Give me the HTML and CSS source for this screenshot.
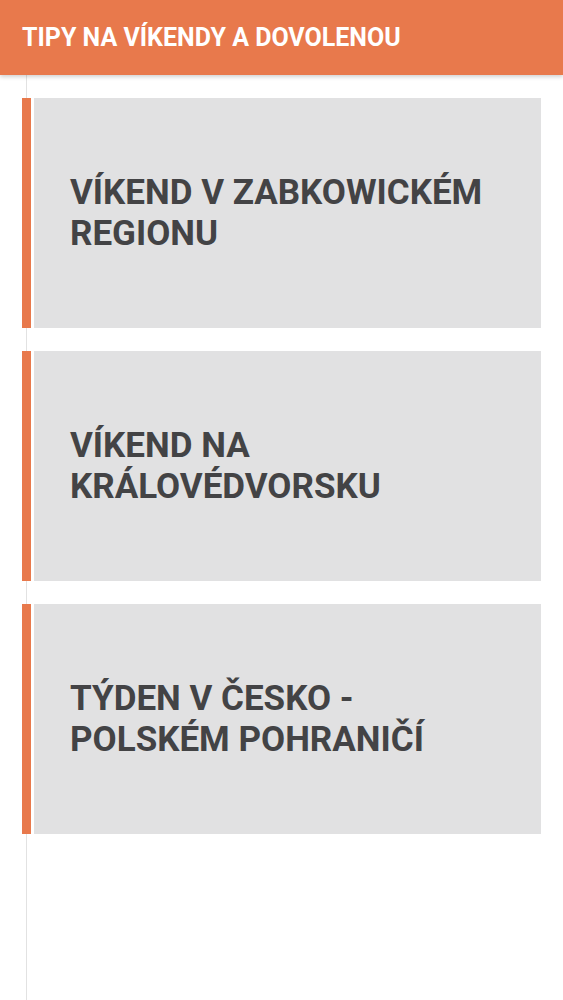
FILE: index.html
```html
<!DOCTYPE html>
<html lang="cs">
<head>
<meta charset="utf-8">
<link rel="stylesheet" href="styles.css">
</head>
<body>
<header class="bar"><h1 class="bar-title">TIPY NA VÍKENDY A DOVOLENOU</h1></header>
<main class="list">
  <a class="card" href="#"><span class="card-title">VÍKEND V ZABKOWICKÉM REGIONU</span></a>
  <a class="card" href="#"><span class="card-title">VÍKEND NA KRÁLOVÉDVORSKU</span></a>
  <a class="card" href="#"><span class="card-title">TÝDEN V ČESKO - POLSKÉM POHRANIČÍ</span></a>
</main>
</body>
</html>
```
FILE: styles.css
```css
html, body { margin: 0; padding: 0; }
body {
  font-family: Roboto, "Noto Sans", sans-serif;
  background: #fff;
  min-height: 1000px;
  position: relative;
  overflow: hidden;
}
body::before {
  content: "";
  position: absolute;
  left: 26px;
  top: 0;
  bottom: 0;
  width: 1px;
  background: #e2e2e2;
}
.bar {
  position: relative;
  z-index: 2;
  height: 75px;
  background: #e8794c;
  box-shadow: 0 2px 4px rgba(0,0,0,0.18);
  display: flex;
  align-items: center;
  padding-left: 22px;
}
.bar-title {
  margin: 0;
  color: #fff;
  font-size: 25px;
  font-weight: 700;
  letter-spacing: 0;
}
.list {
  position: relative;
  z-index: 1;
  display: flex;
  flex-direction: column;
  gap: 23px;
  padding: 23px 22px 0 22px;
}
.card {
  display: flex;
  align-items: center;
  height: 230px;
  background: #e1e1e2;
  border-left: 9px solid #e8794c;
  box-shadow: inset 3px 0 0 #fff;
  padding-left: 39px;
  padding-right: 30px;
  text-decoration: none;
  box-sizing: border-box;
}
.card-title {
  color: #434345;
  font-size: 35px;
  font-weight: 700;
  line-height: 41px;
}
```
